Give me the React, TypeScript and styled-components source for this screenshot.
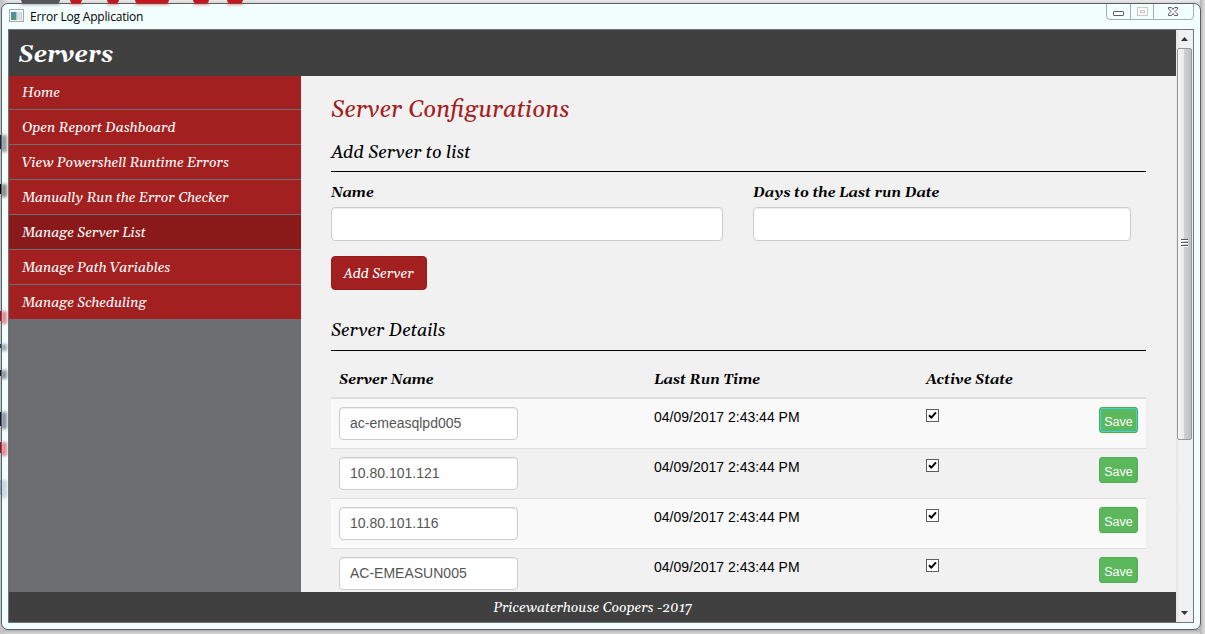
import React from "react";
import styled, { createGlobalStyle, css } from "styled-components";

const georgia = `Gelasio, Georgia, "Liberation Serif", serif`;
const arial = `Arial, "Liberation Sans", sans-serif`;

const GlobalStyle = createGlobalStyle`
  *, *::before, *::after { box-sizing: border-box; }
  body { margin: 0; overflow: hidden; font: 14px/20px ${arial}; color: #000; }
`;

const Desktop = styled.div`
  position: relative;
  width: 1205px;
  height: 634px;
  padding: 3px 4px 4px 1px;
  overflow: hidden;
  background: linear-gradient(to right, #c4c4c4 0, #c4c4c4 2px, transparent 8px, transparent 1200px, #b4b4b4 1200px, #dedede 1205px),
    linear-gradient(to bottom, #e9e9e9 0, #cfcfcf 4px, #c8c8c8 629px, #a4a4a4 629px, #dadada 634px);
`;

const Backdrop = styled.svg`
  position: absolute;
  left: 0;
  top: 0;
`;

const AppWindow = styled.div`
  display: flex;
  flex-direction: column;
  width: 1200px;
  height: 627px;
  padding: 0 6px 6px;
  border: 1px solid #5a5f5f;
  border-radius: 7px;
  background: #f3ffff;
`;

const TitleBar = styled.header`
  display: flex;
  flex: 0 0 25px;
  height: 25px;
  padding-left: 1px;
`;

const TitleIcon = styled.svg`
  margin-top: 5px;
  flex: none;
`;

const TitleText = styled.span`
  margin: 3px auto 0 6px;
  font: 12px/20px "Open Sans", "Noto Sans", sans-serif;
  letter-spacing: -0.2px;
`;

const Controls = styled.svg`
  flex: none;
  display: block;
`;

const Frame = styled.div`
  display: flex;
  flex: 1;
  min-height: 0;
  border: 1px solid #6f7676;
`;

const Page = styled.div`
  display: flex;
  flex-direction: column;
  width: 1167px;
`;

const PageHeader = styled.div`
  flex: 0 0 46px;
  height: 46px;
  padding-left: 9px;
  background: #404041;
  color: #fff;
  font: italic 700 24px/50px ${georgia};
`;

const Columns = styled.div`
  display: flex;
  flex: 1;
  min-height: 0;
`;

const Sidebar = styled.nav`
  width: 292px;
  background: #6d6e71;
`;

const NavItem = styled.a<{ $active?: boolean }>`
  display: block;
  height: 35px;
  padding-left: 13px;
  background: ${(p) => (p.$active ? "#8a1a1a" : "#a32020")};
  border-bottom: 1px solid #6d6e71;
  color: #fff;
  font: italic 14px/37px ${georgia};
  &:first-child { height: 34px; line-height: 35px; }
  &:last-child { border-bottom-color: #a32020; height: 34px; }
`;

const Main = styled.main`
  flex: 1;
  padding: 0 30px;
  overflow: hidden;
  background: #f1f1f1;
`;

const Title = styled.h1`
  height: 62px;
  margin: 0;
  color: #a32020;
  font: italic 24px/68px ${georgia};
`;

const SectionTitle = styled.h2<{ $height: number }>`
  height: ${(p) => p.$height}px;
  margin: 0;
  border-bottom: 1px solid #000;
  font: italic 18px/${(p) => p.$height - 4}px ${georgia};
`;

const Form = styled.div`
  display: flex;
  gap: 30px;
  padding: 11px 0 15px;
`;

const Field = styled.label<{ $width: number }>`
  display: flex;
  flex-direction: column;
  width: ${(p) => p.$width}px;
  font: italic 700 14px/20px ${georgia};
`;

const Input = styled.input<{ $row?: boolean }>`
  display: block;
  width: 100%;
  height: 34px;
  margin-top: 4px;
  padding: 6px 10px;
  border: 1px solid #ccc;
  border-radius: 4px;
  outline: 0;
  background: #fff;
  box-shadow: inset 0 1px 1px rgba(0, 0, 0, 0.075);
  color: #555;
  font: 14px ${arial};
  ${(p) =>
    p.$row &&
    css`
      width: 179px;
      height: 33px;
      margin-top: 0;
      padding: 5px 10px 7px;
    `}
`;

const AddButton = styled.button`
  display: block;
  width: 96px;
  height: 34px;
  margin-bottom: 25px;
  padding: 1px 1px 0 0;
  border: 1px solid #9b1c1c;
  border-radius: 4px;
  background: #a32020;
  color: #fff;
  font: italic 14px/32px ${georgia};
`;

const columns = css`
  display: grid;
  grid-template-columns: 315px 272px 1fr 39px;
  padding: 8px;
`;

const HeadRow = styled.div`
  ${columns}
  height: 48px;
  padding-top: 19px;
  border-bottom: 2px solid #ddd;
  font: italic 700 14px/20px ${georgia};
`;

const Row = styled.div<{ $odd: boolean }>`
  ${columns}
  height: 50px;
  align-items: start;
  border-bottom: 1px solid #ddd;
  background: ${(p) => (p.$odd ? "#f9f9f9" : "#f1f1f1")};
`;

const Check = styled.svg`
  display: block;
  margin-top: 2px;
`;

const SaveButton = styled.button<{ $focused: boolean }>`
  width: 39px;
  height: 26px;
  padding: 3px 0 0;
  border: 1px solid #4cae4c;
  border-radius: 3px;
  background: #5cb85c;
  box-shadow: ${(p) => (p.$focused ? "inset 0 0 0 1px #3fd0e8" : "none")};
  color: #fff;
  font: 12.5px/20px ${arial};
`;

const Footer = styled.footer`
  flex: 0 0 30px;
  height: 30px;
  background: #404041;
  color: #fff;
  text-align: center;
  font: italic 14px/32px ${georgia};
`;

const Scrollbar = styled.div`
  display: flex;
  flex-direction: column;
  flex: 1;
  background: linear-gradient(to right, #e6e6e6, #f1f1f1 4px, #f1f1f1);
`;

const Arrow = styled.svg`
  display: block;
  height: 18px;
`;

const Thumb = styled.div`
  display: flex;
  align-items: center;
  justify-content: center;
  width: 15px;
  height: 392px;
  margin: 0 0 auto 1px;
  padding: 0 1px 3px 0;
  border: 1px solid #979797;
  border-radius: 2px;
  background: linear-gradient(to right, #f6f6f6 0, #e8e8e9 45%, #d0d0d3 50%, #c0c0c4 100%);
`;

const links = [
  "Home",
  "Open Report Dashboard",
  "View Powershell Runtime Errors",
  "Manually Run the Error Checker",
  "Manage Server List",
  "Manage Path Variables",
  "Manage Scheduling",
];

const servers = ["ac-emeasqlpd005", "10.80.101.121", "10.80.101.116", "AC-EMEASUN005"];

const topMarks = [
  [21, 39, "#55565a"],
  [70, 12, "#c4161f"],
  [107, 12, "#c4161f"],
  [135, 34, "#c4161f"],
  [193, 16, "#c4161f"],
  [227, 16, "#c4161f"],
] as const;

const edgeMarks = [
  [135, 14, "#1c2430"],
  [184, 10, "#000"],
  [311, 10, "#c4001c"],
  [344, 4, "#33415c"],
  [370, 6, "#10182c"],
  [412, 14, "#10182c"],
  [442, 11, "#c4001c"],
  [480, 15, "#8d9fc0"],
] as const;

const BackgroundMarks = () => (
  <Backdrop width="260" height="634">
    {edgeMarks.map(([y, h, fill]) => (
      <rect key={y} x="0" y={y} width="1" height={h} fill={fill} />
    ))}
  </Backdrop>
);

const GlassReflections = () => (
  <Backdrop width="260" height="634">
    <defs>
      <filter id="glass" x="-50%" y="-50%" width="200%" height="200%">
        <feGaussianBlur stdDeviation="1.5" />
      </filter>
      <clipPath id="edge"><rect x="2" y="30" width="6" height="590" /></clipPath>
      <clipPath id="top"><rect x="8" y="4" width="252" height="6" /></clipPath>
    </defs>
    <g clipPath="url(#edge)">
      {edgeMarks.map(([y, h, fill]) => (
        <rect key={y} x="1" y={y} width="6" height={h + 3} fill={fill} opacity="0.45" filter="url(#glass)" />
      ))}
    </g>
    <g clipPath="url(#top)">
      {topMarks.map(([x, w, fill]) => (
        <rect key={x} x={x} y="0" width={w} height="5" fill={fill} opacity="0.45" filter="url(#glass)" />
      ))}
    </g>
    {topMarks.map(([x, w, fill]) => (
      <rect key={x} x={x} y="-8" width={w} height="11.500" rx="4" fill={fill} />
    ))}
  </Backdrop>
);

const AppIcon = () => (
  <TitleIcon width="15" height="14" viewBox="0 0 15 14">
    <defs>
      <linearGradient id="pane" x2="0.6" y2="1">
        <stop offset="0" stopColor="#4f86b8" />
        <stop offset="1" stopColor="#4f9a72" />
      </linearGradient>
    </defs>
    <rect x="0.5" y="0.5" width="14" height="12" fill="#f5f5f5" stroke="#a5a9a9" />
    <rect x="2" y="3" width="5.500" height="8" fill="url(#pane)" />
    <rect x="8" y="3" width="3" height="8" fill="#dcdfe2" />
    <rect x="11.500" y="3" width="1.500" height="8" fill="#c3d0d4" />
  </TitleIcon>
);

const WindowControls = () => (
  <Controls width="95" height="18" viewBox="0 0 95 18">
    <path d="M7.500 0v12q0 3.500 3.500 3.500h80q3.500 0 3.500-3.500V0M31.500 0v15.500M54.500 0v15.500" fill="none" stroke="#a5adad" />
    <rect x="14.500" y="7.500" width="10" height="4" rx="0.500" fill="#fff" stroke="#5b6070" />
    <rect x="38.500" y="3.500" width="10" height="8" fill="#fafafa" stroke="#c5caca" />
    <rect x="41.500" y="6.500" width="4" height="2" fill="none" stroke="#c5caca" />
    <path
      d="M69.500 3.500h3l1.500 2l1.500-2h3v1.500l-2.500 2.500l2.500 2.500v1.500h-3l-1.500-2l-1.500 2h-3v-1.500l2.500-2.500l-2.500-2.500z"
      fill="#f4f4f4"
      stroke="#5b6070"
    />
  </Controls>
);

export default function App() {
  return (
    <Desktop>
      <GlobalStyle />
      <BackgroundMarks />
      <AppWindow>
        <TitleBar>
          <AppIcon />
          <TitleText>Error Log Application</TitleText>
          <WindowControls />
        </TitleBar>
        <Frame>
          <Page>
            <PageHeader>Servers</PageHeader>
            <Columns>
              <Sidebar>
                {links.map((link) => (
                  <NavItem key={link} $active={link === "Manage Server List"}>{link}</NavItem>
                ))}
              </Sidebar>
              <Main>
                <Title>Server Configurations</Title>
                <SectionTitle $height={34}>Add Server to list</SectionTitle>
                <Form>
                  <Field $width={392}>Name<Input /></Field>
                  <Field $width={378}>Days to the Last run Date<Input /></Field>
                </Form>
                <AddButton>Add Server</AddButton>
                <SectionTitle $height={36}>Server Details</SectionTitle>
                <HeadRow>
                  <span>Server Name</span>
                  <span>Last Run Time</span>
                  <span>Active State</span>
                </HeadRow>
                {servers.map((server, i) => (
                  <Row key={server} $odd={i % 2 === 0}>
                    <Input $row defaultValue={server} />
                    <span>04/09/2017 2:43:44 PM</span>
                    <Check width="13" height="13" viewBox="0 0 13 13">
                      <rect x="0.5" y="0.5" width="12" height="12" fill="#fff" stroke="#5e5e5e" />
                      <path d="M3 6.300L5.300 8.600L10 3.300" fill="none" stroke="#000" strokeWidth="2" />
                    </Check>
                    <SaveButton $focused={i === 0}>Save</SaveButton>
                  </Row>
                ))}
              </Main>
            </Columns>
            <Footer>Pricewaterhouse Coopers -2017</Footer>
          </Page>
          <Scrollbar>
            <Arrow width="17" viewBox="0 0 17 18"><path d="M5 11L8.500 7L12 11z" fill="#333" /></Arrow>
            <Thumb>
              <svg width="7" height="9" viewBox="0 0 7 9">
                <path d="M0 1.500h7M0 4.500h7M0 7.500h7" stroke="#555" />
                <path d="M0 2.500h7M0 5.500h7M0 8.500h7" stroke="#fff" />
              </svg>
            </Thumb>
            <Arrow width="17" viewBox="0 0 17 18"><path d="M5 7L8.500 11L12 7z" fill="#333" /></Arrow>
          </Scrollbar>
        </Frame>
      </AppWindow>
      <GlassReflections />
    </Desktop>
  );
}
